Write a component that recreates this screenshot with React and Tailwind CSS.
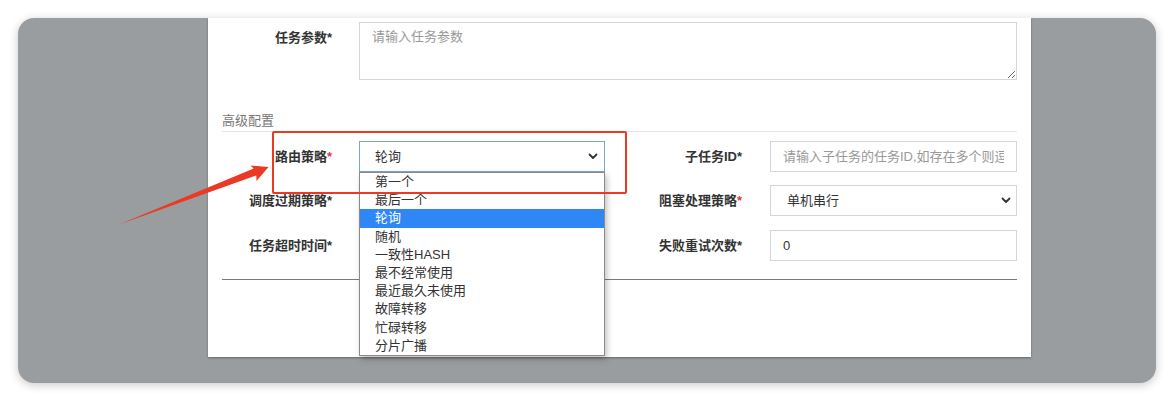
import React from "react";

const FONT = "font-['Liberation_Sans','Noto_Sans_CJK_SC',sans-serif]";

function Chevron() {
  return (
    <svg width="10" height="7" viewBox="0 0 10 7" className="shrink-0">
      <polyline points="1.5,1.5 5,5 8.5,1.5" fill="none" stroke="#333" strokeWidth="1.8" strokeLinecap="round" strokeLinejoin="round" />
    </svg>
  );
}

function Label({ text, red }) {
  return (
    <div className="w-[110px] shrink-0 text-right text-[13px] font-bold text-[#333] leading-[18px]">
      {text}
      <span className={red ? "text-[#e4393c]" : "text-[#333]"}>*</span>
    </div>
  );
}

function Label2({ text, red }) {
  return (
    <div className="w-[137px] shrink-0 text-right text-[13px] font-bold text-[#333] leading-[18px]">
      {text}
      <span className={red ? "text-[#e4393c]" : "text-[#333]"}>*</span>
    </div>
  );
}

const options = ["第一个", "最后一个", "轮询", "随机", "一致性HASH", "最不经常使用", "最近最久未使用", "故障转移", "忙碌转移", "分片广播"];

export default function App() {
  return (
    <div className={`relative w-[1174px] h-[401px] bg-white p-[18px] ${FONT}`}>
      <div className="h-[365px] rounded-[16px] bg-[#9a9d9f] shadow-[0_2px_10px_rgba(0,0,0,0.22)] pl-[190px] pr-[125px] overflow-hidden">
        <div className="h-[339px] bg-white shadow-[0_1px_2px_rgba(0,0,0,0.35)] px-[14px] pt-[4px]">
          {/* 任务参数 */}
          <div className="flex items-start">
            <div className="pt-[7px]">
              <Label text="任务参数" />
            </div>
            <textarea
              className="ml-[27px] w-[658px] h-[58px] border border-[#d2d6de] px-[12px] py-[5px] text-[13px] leading-[18px] text-[#333] placeholder:text-[#999] outline-none"
              placeholder="请输入任务参数"
            />
          </div>

          {/* 高级配置 */}
          <div className="mt-[32px] h-[20px] border-b border-[#e5e5e5] text-[13px] leading-[18px] text-[#777]">高级配置</div>

          {/* Row 1 */}
          <div className="mt-[9px] flex items-center h-[31px]">
            <Label text="路由策略" red />
            <div className="relative ml-[27px] w-[246px] h-[31px]">
              <div className="h-full border border-[#7ea6cc] flex items-center justify-between pl-[15px] pr-[6px] text-[13px] text-[#333]">
                <span>轮询</span>
                <Chevron />
              </div>
              <div className="absolute left-0 top-[31px] w-[246px] z-10 border border-[#8a8a8a] bg-white shadow-[2px_3px_6px_rgba(0,0,0,0.25)]">
                {options.map((o) => (
                  <div
                    key={o}
                    className={`h-[18.2px] leading-[18.2px] pl-[15px] text-[13px] ${o === "轮询" ? "bg-[#2f87f5] text-white" : "text-[#333]"}`}
                  >
                    {o}
                  </div>
                ))}
              </div>
            </div>
            <Label2 text="子任务ID" />
            <input
              className="ml-[28px] w-[247px] h-[31px] border border-[#d2d6de] px-[12px] text-[13px] text-[#333] placeholder:text-[#999] outline-none"
              placeholder="请输入子任务的任务ID,如存在多个则逗号分隔"
            />
          </div>

          {/* Row 2 */}
          <div className="mt-[13px] flex items-center h-[31px]">
            <Label text="调度过期策略" />
            <div className="ml-[27px] w-[246px] h-[31px]" />
            <Label2 text="阻塞处理策略" red />
            <div className="ml-[28px] w-[247px] h-[31px] border border-[#d2d6de] flex items-center justify-between pl-[16px] pr-[5px] text-[13px] text-[#333]">
              <span>单机串行</span>
              <Chevron />
            </div>
          </div>

          {/* Row 3 */}
          <div className="mt-[14px] flex items-center h-[31px]">
            <Label text="任务超时时间" />
            <div className="ml-[27px] w-[246px] h-[31px]" />
            <Label2 text="失败重试次数" />
            <div className="ml-[28px] w-[247px] h-[31px] border border-[#d2d6de] flex items-center pl-[12px] text-[13px] text-[#333]">
              0
            </div>
          </div>

          <div className="mt-[18px] h-px bg-[#7a7a7a]" />
        </div>
      </div>

      {/* annotation: red box */}
      <div className="absolute left-[272px] top-[131px] w-[355px] h-[63px] border-2 border-[#ea3a24] rounded-[2px] z-20" />
      {/* annotation: arrow */}
      <svg className="absolute left-0 top-0 z-20 pointer-events-none" width="1174" height="401">
        <polygon
          points="119,224.5 253.7,168.6 250.5,165.5 268.5,167 256.5,181 256.3,175.4"
          fill="#ea3a24"
        />
      </svg>
    </div>
  );
}
